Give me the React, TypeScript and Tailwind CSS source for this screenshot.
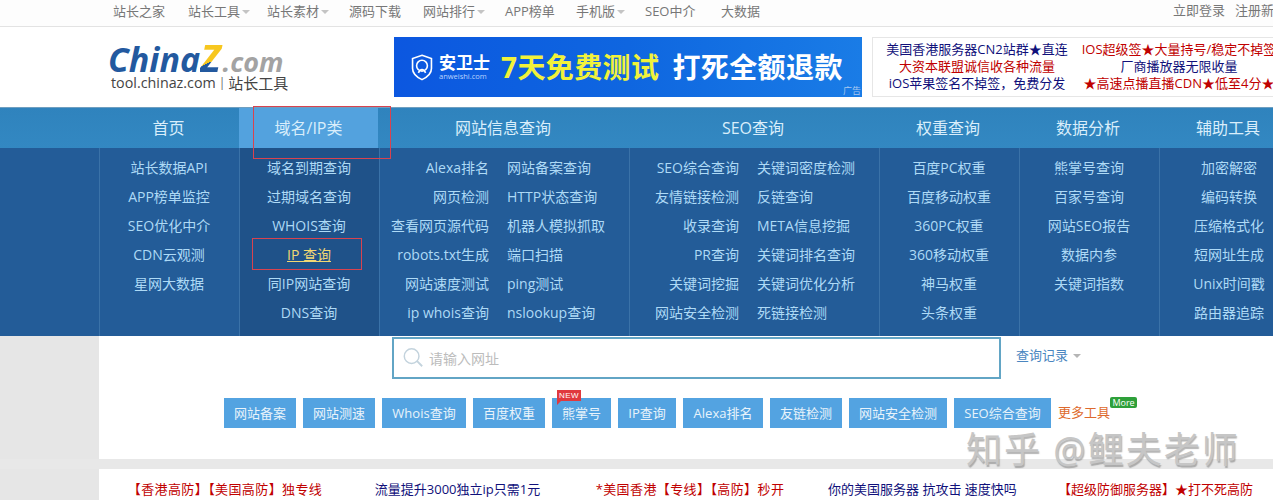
import React from "react";

const FONT = '"Open Sans","Noto Sans CJK SC",sans-serif';

function Caret({ c = "border-t-[#c4c4c4]" }: { c?: string }) {
  return <span className={`inline-block w-0 h-0 border-x-[4px] border-x-transparent border-t-[4px] ${c}`} />;
}

const topLinks: [string, number, boolean][] = [
  ["站长之家", 75, false],
  ["站长工具", 79, true],
  ["站长素材", 82, true],
  ["源码下载", 74, false],
  ["网站排行", 82, true],
  ["APP榜单", 71, false],
  ["手机版", 69, true],
  ["SEO中介", 76, false],
  ["大数据", 60, false],
];

const navs: [string, number][] = [
  ["首页", 141],
  ["域名/IP类", 139],
  ["网站信息查询", 250],
  ["SEO查询", 250],
  ["权重查询", 140],
  ["数据分析", 140],
  ["辅助工具", 140],
];

const col1 = ["站长数据API", "APP榜单监控", "SEO优化中介", "CDN云观测", "星网大数据"];
const col2 = ["域名到期查询", "过期域名查询", "WHOIS查询", "IP 查询", "同IP网站查询", "DNS查询"];
const col3: [string, string][] = [
  ["Alexa排名", "网站备案查询"],
  ["网页检测", "HTTP状态查询"],
  ["查看网页源代码", "机器人模拟抓取"],
  ["robots.txt生成", "端口扫描"],
  ["网站速度测试", "ping测试"],
  ["ip whois查询", "nslookup查询"],
];
const col4: [string, string][] = [
  ["SEO综合查询", "关键词密度检测"],
  ["友情链接检测", "反链查询"],
  ["收录查询", "META信息挖掘"],
  ["PR查询", "关键词排名查询"],
  ["关键词挖掘", "关键词优化分析"],
  ["网站安全检测", "死链接检测"],
];
const col5 = ["百度PC权重", "百度移动权重", "360PC权重", "360移动权重", "神马权重", "头条权重"];
const col6 = ["熊掌号查询", "百家号查询", "网站SEO报告", "数据内参", "关键词指数"];
const col7 = ["加密解密", "编码转换", "压缩格式化", "短网址生成", "Unix时间戳", "路由器追踪"];

const quick: [string, number][] = [
  ["网站备案", 72],
  ["网站测速", 72],
  ["Whois查询", 84],
  ["百度权重", 72],
  ["熊掌号", 59],
  ["IP查询", 58],
  ["Alexa排名", 80],
  ["友链检测", 72],
  ["网站安全检测", 98],
  ["SEO综合查询", 97],
];

function CenterCol({ items, dark }: { items: string[]; dark?: boolean }) {
  return (
    <div className={`w-[140px] shrink-0 border-l border-[#3a72a8] ${dark ? "bg-[#1f5289]" : ""} pt-[5px] pr-[1px]`}>
      {items.map((t) => (
        <div key={t} className="h-[29px] leading-[29px] text-center whitespace-nowrap">
          {t === "IP 查询" ? <span className="text-[#f2d873] underline">{t}</span> : t}
        </div>
      ))}
    </div>
  );
}

function PairCol({ items }: { items: [string, string][] }) {
  return (
    <div className="w-[250px] shrink-0 border-l border-[#3a72a8] pt-[5px]">
      {items.map(([a, b]) => (
        <div key={a} className="h-[29px] leading-[29px] flex whitespace-nowrap">
          <div className="w-[109px] text-right">{a}</div>
          <div className="ml-[18px]">{b}</div>
        </div>
      ))}
    </div>
  );
}

function ShieldIcon() {
  return (
    <svg width="22" height="27" viewBox="0 0 24 30" fill="none" stroke="#fff" strokeWidth="1.8">
      <path d="M12 1.5 L22.5 5 V16 C22.5 22 17 26 12 28.5 C7 26 1.5 22 1.5 16 V5 Z" />
      <circle cx="12" cy="13" r="6" />
      <path d="M8 21 C10 16 14 16 16 21" />
    </svg>
  );
}

export default function App() {
  return (
    <div className="w-[1273px] h-[500px] overflow-hidden relative bg-[#e6e6e6]" style={{ fontFamily: FONT }}>
      {/* top bar */}
      <div className="h-[27px] bg-[#fdfdfd] border-b border-[#e3e3e3] flex items-center pl-[113px] pb-[2px] text-[13px] text-[#777] whitespace-nowrap">
        {topLinks.map(([t, w, caret]) => (
          <div key={t} className="shrink-0 flex items-center gap-[2px]" style={{ width: w }}>
            <span>{t}</span>
            {caret && <Caret />}
          </div>
        ))}
        <div className="ml-auto flex gap-[10px] -mt-[3px] w-[100px] overflow-hidden shrink-0">
          <span className="shrink-0">立即登录</span>
          <span className="shrink-0">注册新用户</span>
        </div>
      </div>

      {/* logo row */}
      <div className="h-[80px] bg-white flex">
        <div className="w-[394px] shrink-0 pl-[108px] pt-[14px]">
          <div className="h-[33px] flex items-baseline text-[34px] leading-[33px] font-bold whitespace-nowrap" style={{ fontFamily: '"Open Sans",sans-serif' }}>
            <span className="italic text-[#23599f]">China</span>
            <span className="italic text-[38px] leading-[33px] pr-[4px] bg-[linear-gradient(155deg,#f7c71f_58%,#23599f_58%)] bg-clip-text text-transparent">Z</span>
            <span className="italic text-[#a3a3a3] text-[27px] -ml-[2px]">.com</span>
          </div>
          <div className="text-[14.3px] leading-[18px] text-[#444] whitespace-nowrap pl-[3px] flex items-center">
            tool.chinaz.com<span className="ml-[3px] mr-[3px] text-[#666] text-[12px]">|</span><span className="text-[15px]">站长工具</span>
          </div>
        </div>
        <div className="w-[468px] h-[60px] mt-[10px] shrink-0 bg-gradient-to-r from-[#0c57e0] via-[#0f66e0] to-[#1a7ce6] relative flex items-center pl-[17px] whitespace-nowrap">
          <ShieldIcon />
          <div className="ml-[6px] w-[50px] text-white">
            <div className="text-[17px] leading-[18px] font-bold">安卫士</div>
            <div className="text-[7.5px] leading-[9px] text-[#b9d4ff]">anweishi.com</div>
          </div>
          <span className="ml-[12px] text-[28px] font-bold text-[#f1f23a] tracking-[0.4px]">7天免费测试</span>
          <span className="ml-[13px] text-[28px] font-bold text-white tracking-[0.4px]">打死全额退款</span>
          <span className="absolute right-[1px] bottom-0 text-[9px] leading-[12px] text-[#a8c8f0]">广告</span>
        </div>
        <div className="ml-[10px] w-[420px] h-[60px] mt-[10px] pt-[3px] shrink-0 border border-[#e6e6e6] flex text-[13px] leading-[17px] whitespace-nowrap text-center">
          <div className="w-[208px] shrink-0">
            <div className="text-[#10107a]">美国香港服务器CN2站群★直连</div>
            <div className="text-[#c00000]">大资本联盟诚信收各种流量</div>
            <div className="text-[#10107a]">iOS苹果签名不掉签，免费分发</div>
          </div>
          <div className="w-[208px] shrink-0 -ml-[6px]">
            <div className="text-[#c00000]">IOS超级签★大量持号/稳定不掉签</div>
            <div className="text-[#10107a]">厂商播放器无限收量</div>
            <div className="text-[#c00000]">★高速点播直播CDN★低至4分★</div>
          </div>
        </div>
      </div>

      {/* main nav */}
      <div className="h-[41px] bg-gradient-to-b from-[#2f83bd] to-[#3388c2] border-t border-[#6f9fc0] flex pl-[98px] text-[16px] text-[#d9eefb] whitespace-nowrap">
        {navs.map(([t, w], i) => (
          <div
            key={t}
            className={`shrink-0 text-center leading-[40px] ${i === 1 ? "bg-[#53a2de]" : ""}`}
            style={{ width: w }}
          >
            {t}
          </div>
        ))}
      </div>

      {/* dropdown */}
      <div className="h-[188px] bg-[#235c98] flex pl-[99px] text-[14px] text-[#aedaf6]">
        <CenterCol items={col1} />
        <CenterCol items={col2} dark />
        <PairCol items={col3} />
        <PairCol items={col4} />
        <CenterCol items={col5} />
        <CenterCol items={col6} />
        <CenterCol items={col7} />
      </div>

      {/* search and tools */}
      <div className="ml-[99px] h-[123px] bg-white">
        <div className="flex pl-[293px] h-[62px] items-start pt-[1px]">
          <div className="w-[609px] h-[42px] border-2 border-[#62a5c5] flex items-center pl-[8px] gap-[3px] shrink-0">
            <svg width="22" height="22" viewBox="0 0 24 24" fill="none" stroke="#c3d3dd" strokeWidth="1.6">
              <circle cx="10.5" cy="10" r="8" />
              <path d="M16.5 15.5 L22 21" strokeWidth="2" />
            </svg>
            <span className="text-[14px] text-[#bcbcbc] ml-[2px]">请输入网址</span>
          </div>
          <div className="ml-[15px] mt-[9px] flex items-center gap-[5px] text-[13px] text-[#4a86c0]">
            查询记录 <Caret c="border-t-[#b5b5b5]" />
          </div>
        </div>
        <div className="flex pl-[125px] gap-[7px] items-center">
          {quick.map(([t, w]) => (
            <div
              key={t}
              className="relative h-[30px] shrink-0 bg-[#53a3e1] text-[13px] leading-[31px] text-center text-[#e8f3fb] whitespace-nowrap"
              style={{ width: w }}
            >
              {t}
              {t === "熊掌号" && (
                <span className="absolute left-[5px] -top-[8px] w-[24px] h-[11px] bg-[#e0393e] text-white text-[8px] leading-[11px] tracking-[0.5px]" style={{ fontFamily: '"Liberation Sans",sans-serif' }}>
                  NEW
                  <span className="absolute left-0 top-[11px] w-0 h-0 border-t-[4px] border-t-[#e0393e] border-r-[4px] border-r-transparent" />
                </span>
              )}
            </div>
          ))}
          <div className="relative text-[13px] text-[#de6a2d] whitespace-nowrap shrink-0">
            更多工具
            <span className="absolute left-[52px] -top-[6px] w-[27px] h-[11px] rounded-[2px] bg-[#2ea03a] text-white text-[9px] leading-[11px] text-center">More</span>
          </div>
        </div>
      </div>

      {/* divider */}
      <div className="h-[10px] bg-[#e8e8e8]" />

      {/* footer ads */}
      <div className="ml-[99px] h-[31px] bg-white flex pl-[10px] text-[13px] leading-[40px] whitespace-nowrap">
        <div className="w-[232px] shrink-0 text-center text-[#c00000] tracking-[0.4px]">【香港高防】【美国高防】独专线</div>
        <div className="w-[233px] shrink-0 text-center text-[#10107a]">流量提升3000独立ip只需1元</div>
        <div className="w-[232px] shrink-0 text-center text-[#c00000] tracking-[0.4px]">*美国香港【专线】【高防】秒开</div>
        <div className="w-[233px] shrink-0 text-center text-[#10107a]">你的美国服务器 抗攻击 速度快吗</div>
        <div className="w-[233px] shrink-0 text-center text-[#c00000]">【超级防御服务器】★打不死高防</div>
      </div>

      {/* annotations and watermark overlay */}
      <div className="absolute left-[253px] top-[106px] w-[138px] h-[53px] border border-[#d8434f] pointer-events-none" />
      <div className="absolute left-[252px] top-[238px] w-[110px] h-[32px] border border-[#d8434f] pointer-events-none" />
      <div className="absolute left-[966px] top-[427px] text-[36px] leading-[46px] tracking-[2px] whitespace-nowrap text-[#c6c6c6] [text-shadow:1px_2px_1px_rgba(120,120,120,0.55)] pointer-events-none">
        知乎 @鲤夫老师
      </div>
    </div>
  );
}
